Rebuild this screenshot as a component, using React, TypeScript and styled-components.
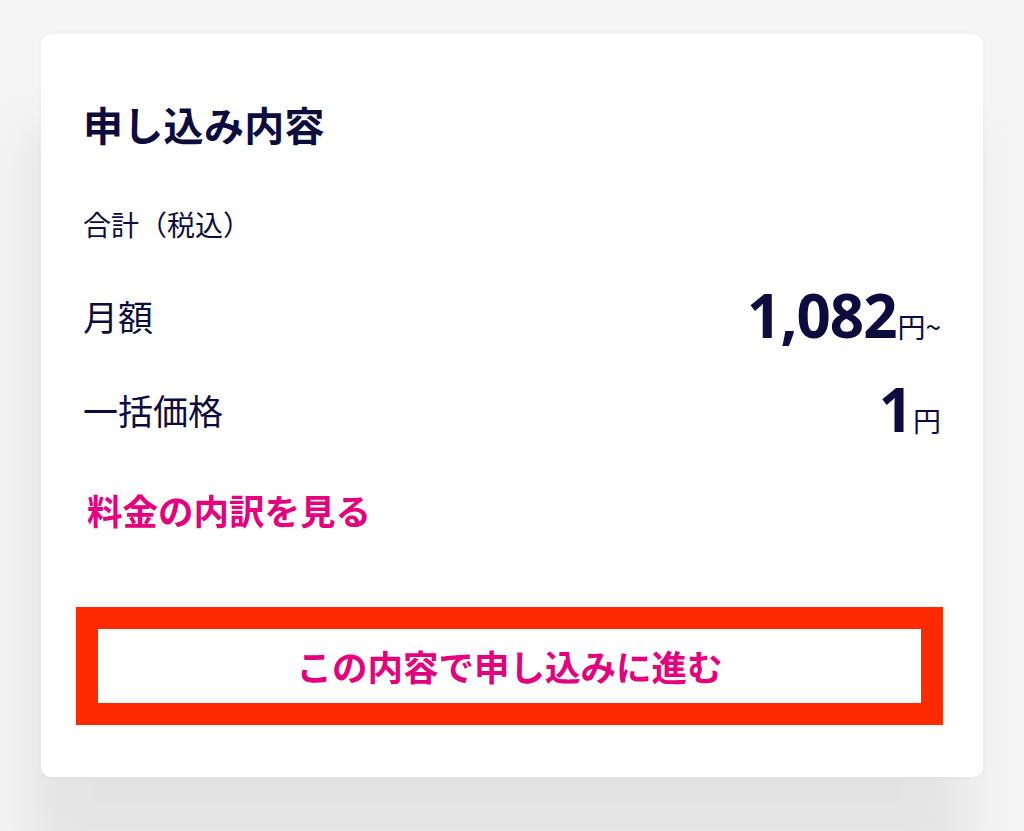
import React from "react";
import styled, { createGlobalStyle } from "styled-components";

const GlobalStyle = createGlobalStyle`
  html, body {
    margin: 0;
    padding: 0;
    background: #f5f5f5;
    height: 100%;
    overflow: hidden;
  }
  body {
    font-family: "Noto Sans CJK JP", "Noto Sans", sans-serif;
    color: #0c0c3e;
  }
`;

const Page = styled.div`
  padding: 34px 41px 0 41px;
`;

const Card = styled.section`
  background: #ffffff;
  border-radius: 10px;
  height: 743px;
  box-sizing: border-box;
  padding: 70px 42px 52px 42px;
  display: flex;
  flex-direction: column;
  box-shadow: -14px 92px 56px rgba(0, 0, 0, 0.072), 0 0 6px rgba(0, 0, 0, 0.035);
`;

const Title = styled.h2`
  margin: 0;
  font-size: 40px;
  line-height: 1;
  font-weight: 700;
  letter-spacing: 0.3px;
`;

const Caption = styled.div`
  margin-top: 66px;
  font-size: 28px;
  line-height: 1;
`;

const Row = styled.div<{ $gap: number }>`
  margin-top: ${(p) => p.$gap}px;
  display: flex;
  justify-content: space-between;
  align-items: center;
  height: 60px;
`;

const Label = styled.span`
  font-size: 35px;
  line-height: 1;
`;

const Price = styled.span`
  display: flex;
  align-items: baseline;
  margin-right: 0;
`;

const Amount = styled.span`
  font-family: "Open Sans", "Noto Sans", sans-serif;
  font-weight: 700;
  font-size: 60px;
  line-height: 1;
  letter-spacing: -1px;
`;

const Unit = styled.span`
  font-size: 28px;
  line-height: 1;
  margin-left: 1px;
`;

const DetailLink = styled.a`
  margin-top: 53px;
  margin-left: 4px;
  font-size: 35.5px;
  line-height: 1;
  font-weight: 700;
  color: #e5007e;
  text-decoration: none;
  cursor: pointer;
`;

const ProceedButton = styled.button`
  margin-top: 79px;
  margin-left: -7px;
  width: 867px;
  height: 119px;
  box-sizing: border-box;
  border: 22px solid #ff2a00;
  background: #ffffff;
  color: #e5007e;
  font-family: "Noto Sans CJK JP", "Noto Sans", sans-serif;
  font-size: 35.5px;
  font-weight: 700;
  line-height: 1;
  display: flex;
  align-items: center;
  justify-content: center;
  padding: 0;
  cursor: pointer;
`;

export default function App() {
  return (
    <>
      <GlobalStyle />
      <Page>
        <Card>
          <Title>申し込み内容</Title>
          <Caption>合計（税込）</Caption>
          <Row $gap={47}>
            <Label>月額</Label>
            <Price>
              <Amount>1,082</Amount>
              <Unit>円~</Unit>
            </Price>
          </Row>
          <Row $gap={34}>
            <Label>一括価格</Label>
            <Price>
              <Amount>1</Amount>
              <Unit>円</Unit>
            </Price>
          </Row>
          <DetailLink>料金の内訳を見る</DetailLink>
          <ProceedButton>この内容で申し込みに進む</ProceedButton>
        </Card>
      </Page>
    </>
  );
}
